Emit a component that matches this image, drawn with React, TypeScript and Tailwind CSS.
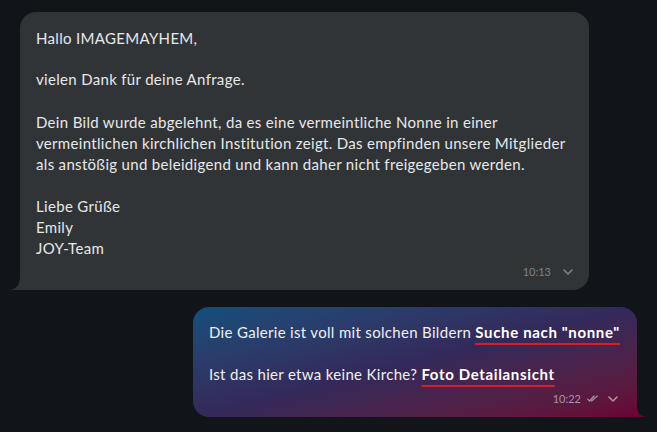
import React from "react";

const Chevron = ({ className = "" }: { className?: string }) => (
  <svg width="10" height="6" viewBox="0 0 10 6" className={className} fill="none">
    <path d="M1 1 L5 5 L9 1" stroke="currentColor" strokeWidth="1.6" strokeLinecap="round" strokeLinejoin="round" />
  </svg>
);

const DoubleCheck = () => (
  <svg width="11" height="7" viewBox="0 0 11 7" fill="none">
    <path d="M0.8 4.2 L2.6 6 L7 1" stroke="currentColor" strokeWidth="1.2" strokeLinecap="round" strokeLinejoin="round" />
    <path d="M4.6 6 L10.2 1" stroke="currentColor" strokeWidth="1.2" strokeLinecap="round" strokeLinejoin="round" />
  </svg>
);

const Link = ({ children }: { children: React.ReactNode }) => (
  <span className="font-bold tracking-[0.65px] text-white underline decoration-[#d0202c] decoration-2 underline-offset-[5px]">
    {children}
  </span>
);

export default function App() {
  return (
    <div
      className="w-[657px] h-[432px] bg-[#111418] flex flex-col pt-[12px] overflow-hidden text-[15px] leading-[21px] tracking-[0.32px] text-[#e7e8e9] whitespace-nowrap"
      style={{ fontFamily: "Lato, 'Liberation Sans', sans-serif" }}
    >
      <div className="relative ml-[20px] w-[569px] h-[278px] bg-[#313437] rounded-2xl rounded-bl-none px-[16px] pt-[16px]">
        <div>Hallo IMAGEMAYHEM,</div>
        <div className="h-[20px]" />
        <div>vielen Dank für deine Anfrage.</div>
        <div className="h-[22px]" />
        <div>Dein Bild wurde abgelehnt, da es eine vermeintliche Nonne in einer</div>
        <div>vermeintlichen kirchlichen Institution zeigt. Das empfinden unsere Mitglieder</div>
        <div>als anstößig und beleidigend und kann daher nicht freigegeben werden.</div>
        <div className="h-[21px]" />
        <div>Liebe Grüße</div>
        <div>Emily</div>
        <div>JOY-Team</div>
        <div className="absolute right-[16px] bottom-[8px] flex items-center gap-[12px] text-[11px] tracking-normal text-[#7f8386]">
          <span>10:13</span>
          <Chevron />
        </div>
        <svg className="absolute left-[-12px] bottom-0" width="12" height="14" viewBox="0 0 12 14">
          <path d="M12 0 Q12 14 0 14 L12 14 Z" fill="#313437" />
        </svg>
      </div>

      <div className="relative self-end mr-[20px] mt-[17px] w-[444px] h-[110px] rounded-2xl rounded-br-none bg-gradient-to-br from-[#0e4f7c] via-[#33295a] to-[#6a0234] pl-[16px] pt-[15px] text-[#eef0f2]">
        <div>
          Die Galerie ist voll mit solchen Bildern <Link>Suche nach "nonne"</Link>
        </div>
        <div className="h-[21px]" />
        <div>
          Ist das hier etwa keine Kirche? <Link>Foto Detailansicht</Link>
        </div>
        <div className="absolute right-[19px] bottom-[8px] flex items-center text-[11px] tracking-normal text-[#a097a8]">
          <span>10:22</span>
          <span className="ml-[6px]"><DoubleCheck /></span>
          <Chevron className="ml-[10px]" />
        </div>
        <svg className="absolute right-[-11px] bottom-0" width="11" height="12" viewBox="0 0 11 12">
          <path d="M0 0 Q0 12 11 12 L0 12 Z" fill="#6a0234" />
        </svg>
      </div>
    </div>
  );
}
